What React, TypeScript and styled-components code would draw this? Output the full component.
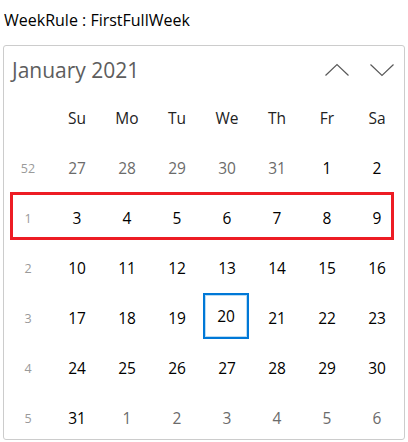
import styled, { createGlobalStyle } from 'styled-components';

const GlobalStyle = createGlobalStyle`
	body {
		margin: 0;
		background: #ffffff;
		font-family: 'Open Sans', 'Noto Sans', sans-serif;
	}
`;

const dayNames = ['Su', 'Mo', 'Tu', 'We', 'Th', 'Fr', 'Sa'];
const weekNumbers = [52, 1, 2, 3, 4, 5];

// builds the 6 weeks shown, starting on Sunday 27 Dec 2020
const buildWeeks = () => {
	const weeks: { day: number; inMonth: boolean }[][] = [];
	const start = new Date(2020, 11, 27);
	for (let w = 0; w < 6; w++) {
		const row = [];
		for (let d = 0; d < 7; d++) {
			const date = new Date(start);
			date.setDate(start.getDate() + w * 7 + d);
			row.push({ day: date.getDate(), inMonth: date.getMonth() === 0 });
		}
		weeks.push(row);
	}
	return weeks;
};

export default function App(): JSX.Element {
	const weeks = buildWeeks();

	return (
		<Page>
			<GlobalStyle />
			<Caption>WeekRule : FirstFullWeek</Caption>
			<Calendar>
				<Header>
					<MonthTitle>January 2021</MonthTitle>
					<NavGroup>
						<NavButton aria-label='previous'>
							<svg width='26' height='16' viewBox='0 0 26 16'>
								<polyline
									points='1.5,13.5 13,2.5 24.5,13.5'
									fill='none'
									stroke='#5a5a5a'
									strokeWidth='1.2'
								/>
							</svg>
						</NavButton>
						<NavButton aria-label='next'>
							<svg width='26' height='16' viewBox='0 0 26 16'>
								<polyline
									points='1.5,2.5 13,13.5 24.5,2.5'
									fill='none'
									stroke='#5a5a5a'
									strokeWidth='1.2'
								/>
							</svg>
						</NavButton>
					</NavGroup>
				</Header>
				<Row>
					<WeekCell />
					{dayNames.map((name) => (
						<DayName key={name}>{name}</DayName>
					))}
				</Row>
				{weeks.map((week, i) => (
					<Row key={i} highlighted={i === 1}>
						<WeekCell>{weekNumbers[i]}</WeekCell>
						{week.map((cell, j) => (
							<DayCell key={j} muted={!cell.inMonth}>
								{cell.inMonth && cell.day === 20 ? (
									<Today>{cell.day}</Today>
								) : (
									cell.day
								)}
							</DayCell>
						))}
					</Row>
				))}
			</Calendar>
		</Page>
	);
}

const Page = styled.div`
	padding: 10px 0 0 3px;
`;

const Caption = styled.div`
	padding-left: 1px;
	height: 20px;
	line-height: 20px;
	font-size: 16px;
	color: #000;
`;

const Calendar = styled.div`
	margin-top: 15px;
	width: 400px;
	height: 393px;
	border: 1px solid #cccccc;
	border-radius: 3px;
	overflow: hidden;
	background: #fff;
`;

const Header = styled.div`
	display: flex;
	align-items: center;
	justify-content: space-between;
	height: 47px;
	padding-left: 8px;
`;

const MonthTitle = styled.div`
	font-size: 21px;
	color: #5d5d5d;
`;

const NavGroup = styled.div`
	display: flex;
`;

const NavButton = styled.div`
	display: flex;
	align-items: center;
	justify-content: center;
	width: 45px;
	height: 40px;
`;

const Row = styled.div<{ highlighted?: boolean }>`
	position: relative;
	display: grid;
	grid-template-columns: 48px repeat(7, 50px);
	height: 50px;

	${(p) =>
		p.highlighted &&
		`
		&::after {
			content: '';
			position: absolute;
			left: 6px;
			top: -1px;
			width: 378px;
			height: 42px;
			border: 3px solid #ed1c24;
		}
	`}
`;

const WeekCell = styled.div`
	display: flex;
	align-items: center;
	justify-content: center;
	font-size: 12.5px;
	color: #9a9a9a;
`;

const DayName = styled.div`
	display: flex;
	align-items: center;
	justify-content: center;
	font-size: 15.5px;
	color: #222;
`;

const DayCell = styled.div<{ muted?: boolean }>`
	position: relative;
	display: flex;
	align-items: center;
	justify-content: center;
	font-size: 15.5px;
	color: ${(p) => (p.muted ? '#6b6b6b' : '#000')};
`;

const Today = styled.span`
	position: absolute;
	left: 1px;
	top: 0;
	width: 42px;
	height: 42px;
	display: flex;
	align-items: center;
	justify-content: center;
	border: 2px solid #0078d7;
	box-shadow: inset 0 0 0 1px #b9dcf5;
`;
